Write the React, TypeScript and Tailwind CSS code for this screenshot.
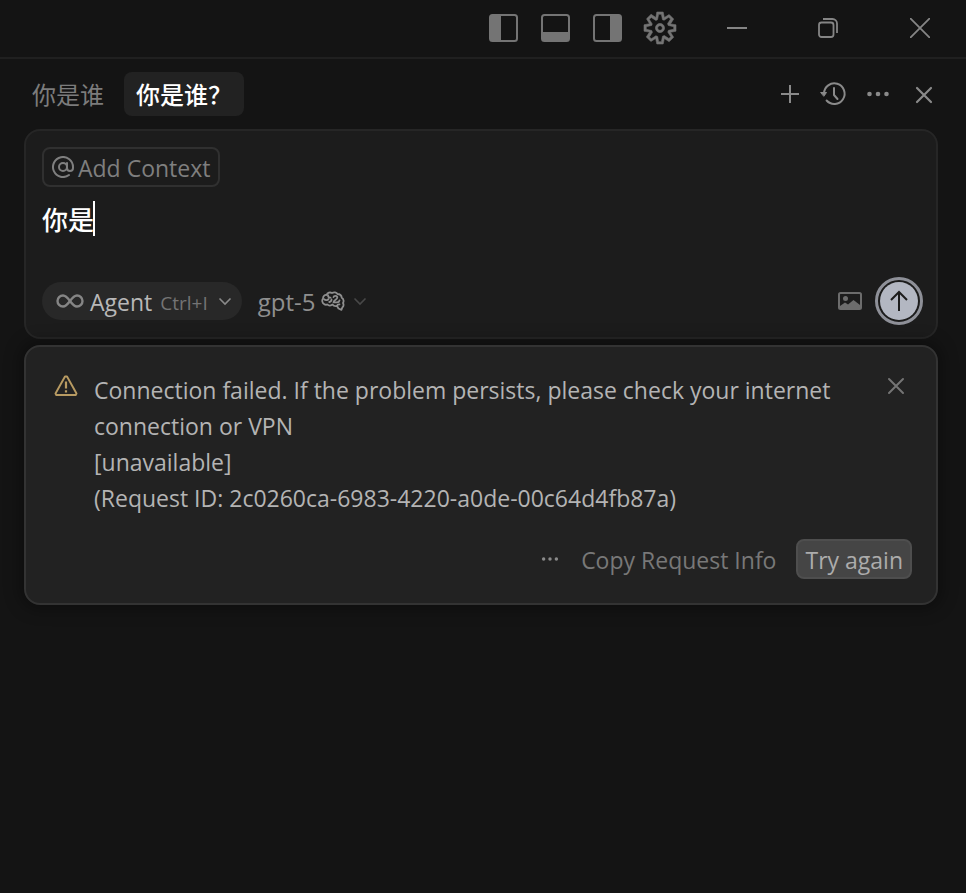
import { useState } from "react";

type PanelSide = "left" | "bottom" | "right";

const panelFill: Record<PanelSide, string> = {
  left: "M2 2h11v24H2z",
  bottom: "M2 18h27v8H2z",
  right: "M18 2h11v24H18z",
};

function PanelIcon({ side }: { side: PanelSide }) {
  return (
    <svg viewBox="0 0 30 28" className="h-7 w-[30px]" fill="none">
      <rect x="2" y="1" width="27" height="26" rx="2.5" stroke="currentColor" strokeWidth="2" />
      <path d={panelFill[side]} fill="currentColor" />
    </svg>
  );
}

function GearIcon() {
  return (
    <svg viewBox="1 1 14 14" className="size-8 overflow-visible" fill="currentColor" stroke="currentColor" strokeWidth=".25">
      <path fillRule="evenodd" clipRule="evenodd" d="M9.1 4.4L8.6 2H7.4l-.5 2.4-.7.3-2-1.3-.9.8 1.3 2-.2.7-2.4.5v1.2l2.4.5.3.8-1.3 2 .8.8 2-1.3.8.3.4 2.3h1.2l.5-2.4.8-.3 2 1.3.8-.8-1.3-2 .3-.8 2.3-.4V7.4l-2.4-.5-.3-.8 1.3-2-.8-.8-2 1.3-.7-.2zM9.4 1l.5 2.4L12 2.1l2 2-1.4 2.1 2.4.4v2.8l-2.4.5L14 12l-2 2-2.100-1.400-.5 2.400H6.600l-.5-2.400L4 13.900l-2-2 1.400-2.100L1 9.400V6.600l2.400-.5L2.100 4l2-2 2.100 1.400.400-2.400h2.800zm.6 7c0 1.100-.9 2-2 2s-2-.9-2-2 .9-2 2-2 2 .9 2 2zM8 9c.6 0 1-.4 1-1s-.4-1-1-1-1 .4-1 1 .4 1 1 1z" />
    </svg>
  );
}

function CloseIcon({ reach }: { reach: "wide" | "tight" }) {
  return (
    <svg viewBox="0 0 24 24" className="size-6" stroke="currentColor" strokeWidth={reach === "wide" ? 2.2 : 2} strokeLinecap="round">
      <path d="M5 5l14 14M19 5L5 19" />
    </svg>
  );
}

function HistoryIcon() {
  return (
    <svg viewBox="0 0 24 24" className="size-6 overflow-visible" fill="none" stroke="currentColor" strokeWidth="2" strokeLinecap="round" strokeLinejoin="round">
      <path d="M2 11.500a10.300 10.300 0 1 1 2.600 7" />
      <path d="M12 6v7l3.500 4" />
      <path d="M-1 10.500h5.500l-2.500 3.500z" fill="currentColor" strokeWidth="1" />
    </svg>
  );
}

function DotsIcon({ className }: { className: string }) {
  return (
    <svg viewBox="0 0 24 24" className={className} fill="currentColor">
      <circle cx="3.500" cy="12" r="2.300" />
      <circle cx="12" cy="12" r="2.300" />
      <circle cx="20.500" cy="12" r="2.300" />
    </svg>
  );
}

function ChevronIcon({ className }: { className: string }) {
  return (
    <svg viewBox="0 0 14 14" className={`size-[14px] ${className}`} fill="none" stroke="currentColor" strokeWidth="1.600">
      <path d="M1.500 4.500L7 10l5.500-5.500" />
    </svg>
  );
}

function WarningIcon() {
  return (
    <svg viewBox="0 0 24 24" className="size-6 text-[#b89b62]" fill="none" stroke="currentColor" strokeWidth="1.900" strokeLinejoin="round">
      <path d="M11 2.500h2L22.500 19.500l-.8 1.500H2.300l-.8-1.500z" />
      <path d="M12 7.500v7M12 16.300v2.200" strokeWidth="2.200" />
    </svg>
  );
}

function BrainIcon() {
  return (
    <svg viewBox="0 0 24 20" className="h-5 w-6" fill="none" stroke="currentColor" strokeWidth="1.800" strokeLinecap="round" strokeLinejoin="round">
      <path d="M3 13C1 12 .8 9 2 7.500 2 5 4 3.500 5.500 4 6.500 1.500 9 1 11 2c2-1.200 4.500-.8 5.500 1 2.500 0 4 1.500 4.300 3.800C22.800 8 23 10.500 22 12c1 2 .5 3.500-.7 4.500l-.8 2.300-3-1.300L16 15c-2 .4-3.500 0-4.500-1.500-2 1.300-4 1.300-5 0-1.500.5-2.500.3-3.500-.5Z" />
      <path d="M3 8.200c1.500 1.500 3.800 1.200 4.500-.2M7 4.200c0 1.500 1 2.500 2.500 2.500M10.500 8.500c0 1.500-.8 2.300-2.200 2.500" />
      <path d="M12.500 6.200c.3-1.800 3.800-2 3.800.3 0 2-3.300 2.500-3.800 4.800H16c1.500 0 2.300-.8 2.500-1.800M16 15c.2-1 1-1.800 2.500-1.600" />
    </svg>
  );
}

function TitleBar() {
  return (
    <header className="flex h-[59px] items-center justify-end border-b-2 border-[#202020] pb-px text-[#747474]">
      <div className="flex items-center gap-[22px]">
        <button aria-label="Toggle primary side bar"><PanelIcon side="left" /></button>
        <button aria-label="Toggle panel"><PanelIcon side="bottom" /></button>
        <button aria-label="Toggle secondary side bar"><PanelIcon side="right" /></button>
        <button aria-label="Settings"><GearIcon /></button>
      </div>
      <div className="ml-[14px] flex text-[#858585]">
        <button aria-label="Minimize" className="grid h-14 w-[92px] place-items-center">
          <svg viewBox="0 0 20 20" className="size-5 overflow-visible" stroke="currentColor" strokeWidth="2"><path d="M1 10h20" /></svg>
        </button>
        <button aria-label="Restore" className="grid h-14 w-[92px] place-items-center">
          <svg viewBox="0 0 20 20" className="size-5" fill="none" stroke="currentColor" strokeWidth="1.800">
            <rect x="1" y="4.500" width="14.500" height="14.500" rx="2.500" />
            <path d="M5 1h9.500a4.500 4.500 0 0 1 4.500 4.500V15" />
          </svg>
        </button>
        <button aria-label="Close" className="grid h-14 w-[92px] place-items-center">
          <svg viewBox="0 0 20 20" className="size-5" stroke="currentColor" strokeWidth="1.800"><path d="M0 0l20 20M20 0L0 20" /></svg>
        </button>
      </div>
    </header>
  );
}

function ChatTabs() {
  const [active, setActive] = useState(1);
  const tabs = ["你是谁", "你是谁？"];

  return (
    <div className="flex items-center justify-between pt-[13px] pr-0.5">
      <div className="flex gap-2">
        {tabs.map((t, i) => (
          <button key={t} onClick={() => setActive(i)} className={`h-11 rounded-lg pt-0.5 text-2xl ${i === active ? "bg-[#222222] px-3 font-medium text-white" : "pl-2 pr-3 text-[#7c7c7c]"}`}>{t}</button>
        ))}
      </div>
      <div className="flex items-center gap-5 text-[#8a8a8a]">
        <button aria-label="New chat">
          <svg viewBox="0 0 24 24" className="size-6" stroke="currentColor" strokeWidth="2"><path d="M12 3v18M3 12h18" /></svg>
        </button>
        <button aria-label="Chat history"><HistoryIcon /></button>
        <button aria-label="More actions"><DotsIcon className="size-6" /></button>
        <button aria-label="Close chat" className="ml-0.5 pt-0.5"><CloseIcon reach="wide" /></button>
      </div>
    </div>
  );
}

function Composer() {
  const [text, setText] = useState("你是");

  return (
    <section className="mt-[13px] rounded-2xl border-2 border-[#262626] bg-[#1c1c1c] pt-4 pr-[13px] pb-3 pl-4">
      <button className="flex h-10 items-center gap-1 rounded-lg border-2 border-[#303030] px-2 text-[23px] text-[#7f7f7f]">
        <svg viewBox="1 1 22 22" className="size-[22px]" fill="none" stroke="currentColor" strokeWidth="2" strokeLinecap="round">
          <circle cx="12" cy="12" r="4" />
          <path d="M16 8v5a3 3 0 0 0 6 0v-1a10 10 0 1 0-4 8" />
        </svg>
        <span className="pt-0.5">Add Context</span>
      </button>
      <div className="relative mt-3 h-[78px]">
        <textarea aria-label="Message" value={text} onChange={(e) => setText(e.target.value)} className="block h-full w-full resize-none bg-transparent pt-px text-[26px] leading-10 font-medium text-white outline-none" />
        {text === "你是" && <span className="absolute top-[2px] left-[51px] h-[35px] w-[2px] bg-white" />}
      </div>
      <div className="flex items-center justify-between">
        <div className="flex items-center gap-4">
          <button className="flex h-[38px] items-center rounded-full bg-[#282828] pr-[10px] pl-[14px]">
            <svg viewBox="0 0 28 14" className="h-[14px] w-7 text-[#858585]" fill="none" stroke="currentColor" strokeWidth="2.400">
              <path d="M14 7C11.500 3.500 9.800 1.500 7 1.500a5.500 5.500 0 0 0 0 11C9.800 12.500 11.500 10.500 14 7s4.200-5.500 7-5.500a5.500 5.500 0 0 1 0 11C18.200 12.500 16.500 10.500 14 7Z" />
            </svg>
            <span className="ml-[6px] pt-0.5 text-[23px] font-medium text-[#b8b8b8]">Agent</span>
            <span className="ml-2 pt-1 text-[19px] text-[#747474]">Ctrl+I</span>
            <ChevronIcon className="ml-[10px] text-[#8a8a8a]" />
          </button>
          <button className="flex items-center text-[#8f8f8f]">
            <span className="pt-0.5 text-2xl">gpt-5</span>
            <span className="ml-[6px]"><BrainIcon /></span>
            <ChevronIcon className="ml-2 text-[#484848]" />
          </button>
        </div>
        <div className="flex items-center gap-[13px]">
          <button aria-label="Attach image" className="text-[#6c6c6c]">
            <svg viewBox="0 0 24 18" className="h-[18px] w-6">
              <rect x="1" y="1" width="22" height="16" rx="1.500" fill="none" stroke="currentColor" strokeWidth="2" />
              <circle cx="7.500" cy="6.500" r="2.500" fill="currentColor" />
              <path d="M2 14l5-3.500 3 2 5.500-4.500L22 13v4H2z" fill="currentColor" />
            </svg>
          </button>
          <button aria-label="Send" className="grid size-12 place-items-center rounded-full border-[3px] border-[#8e9098] bg-[#1c1c1c]">
            <span className="grid size-[38px] place-items-center rounded-full bg-[#b3b7c2] text-[#1c1c1c]">
              <svg viewBox="0 0 20 22" className="h-[22px] w-5" fill="none" stroke="currentColor" strokeWidth="2">
                <path d="M10 21V2M2 10l8-8 8 8" />
              </svg>
            </span>
          </button>
        </div>
      </div>
    </section>
  );
}

function ErrorCard() {
  return (
    <section role="alert" className="mt-[6px] rounded-2xl border-2 border-[#333333] bg-[#222222] p-6 shadow-[0_0_16px_4px_rgba(0,0,0,0.35)]">
      <div className="flex items-start pt-px">
        <span className="mt-0.5 ml-1"><WarningIcon /></span>
        <div className="ml-4 flex-1 text-[23px] leading-9 text-[#b4b4b4]">
          <p>Connection failed. If the problem persists, please check your internet connection or VPN</p>
          <p>[unavailable]</p>
          <p>(Request ID: 2c0260ca-6983-4220-a0de-00c64d4fb87a)</p>
        </div>
        <button aria-label="Dismiss" className="mt-0.5 mr-1 text-[#747474]"><CloseIcon reach="tight" /></button>
      </div>
      <div className="mt-[23px] flex items-center justify-end text-[23px]">
        <button aria-label="More options" className="mr-[22px] text-[#8a8a8a]"><DotsIcon className="size-[18px]" /></button>
        <button className="mr-5 pt-0.5 text-[#787878]">Copy Request Info</button>
        <button className="h-10 rounded-lg border-2 border-[#4e4e4e] bg-[#454545] px-[7px] pt-0.5 text-[#acacac]">Try again</button>
      </div>
    </section>
  );
}

export default function App() {
  return (
    <div className="min-h-screen bg-[#141414] font-['Open_Sans','Noto_Sans_CJK_SC',sans-serif]">
      <TitleBar />
      <main className="pr-7 pl-6">
        <ChatTabs />
        <Composer />
        <ErrorCard />
      </main>
    </div>
  );
}
